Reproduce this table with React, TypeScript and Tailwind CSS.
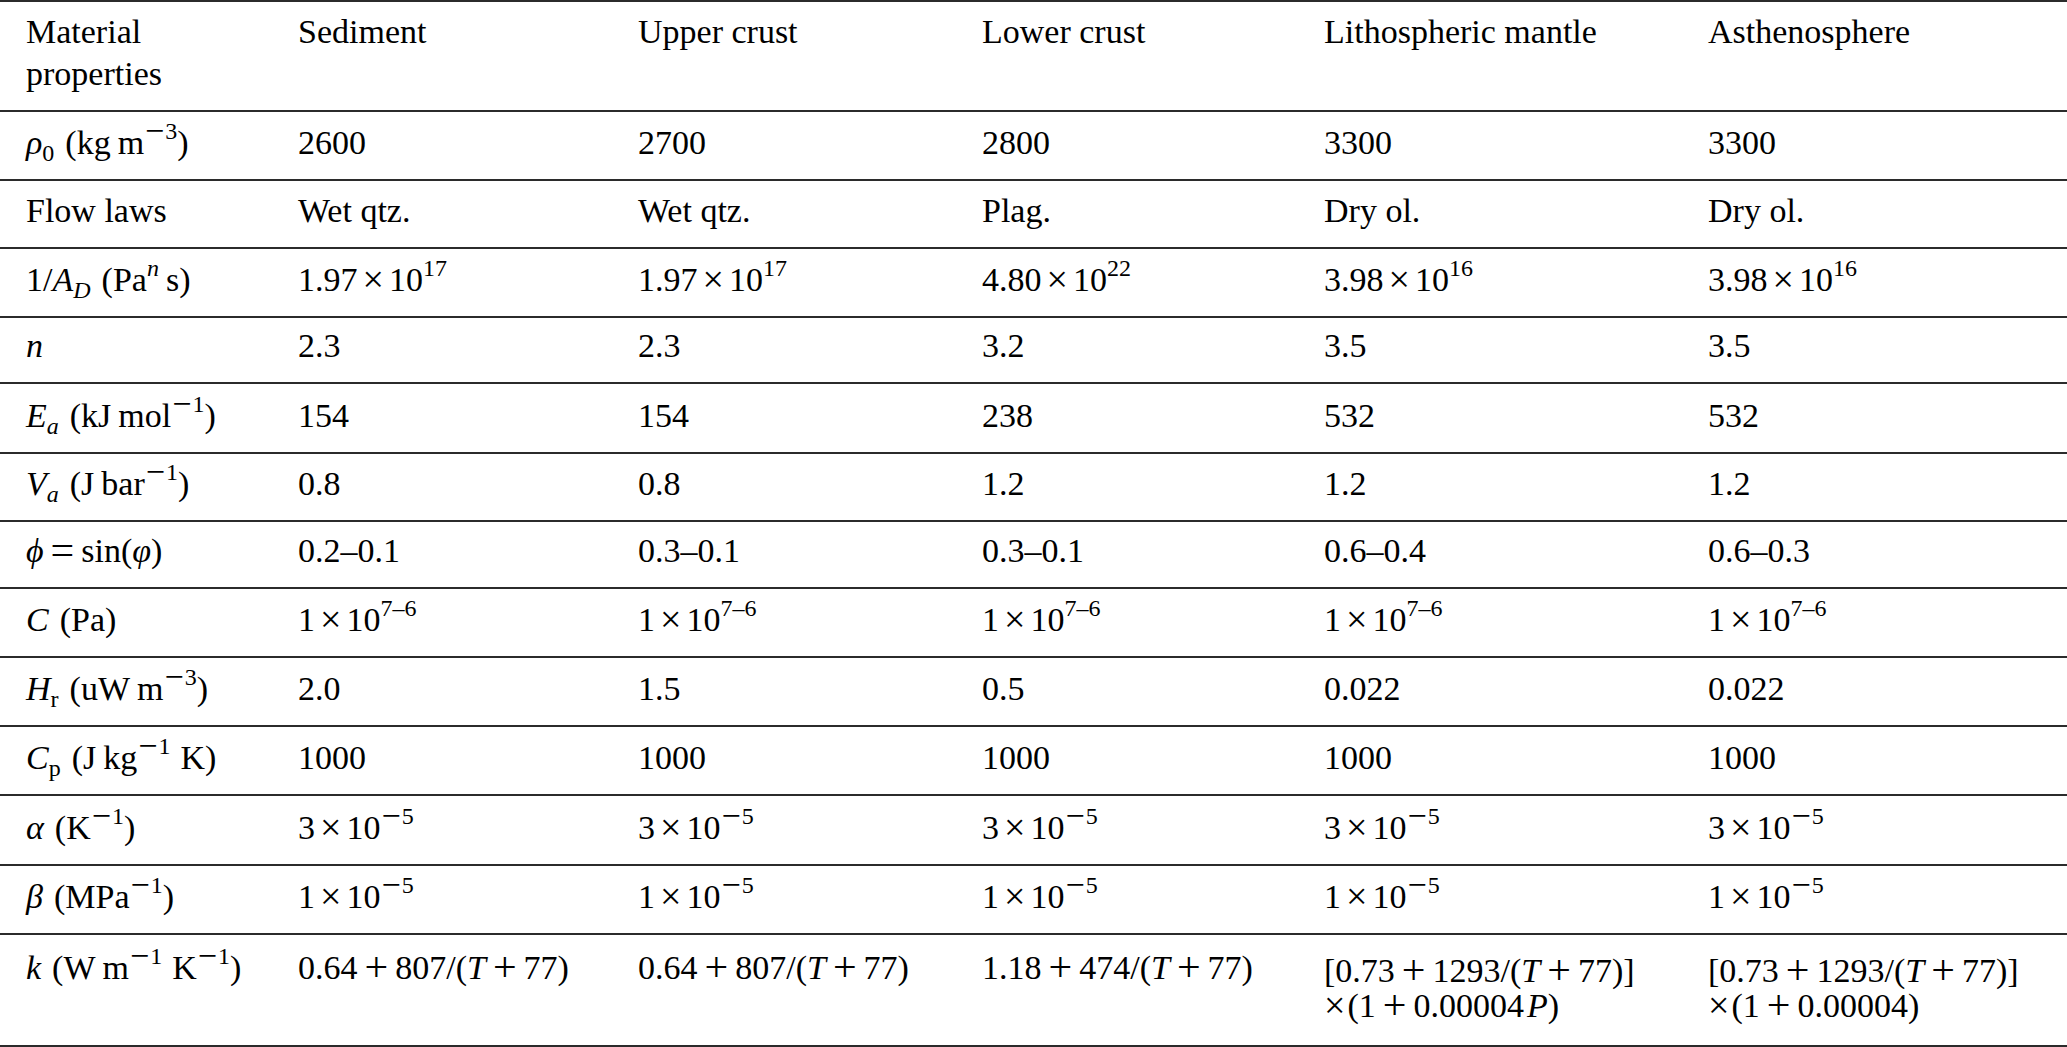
import type { ReactNode } from "react";

const Sup = ({ children }: { children: ReactNode }) => (
  <span className="align-[15px] text-[24px] leading-[10px]">{children}</span>
);

const Sub = ({ children, it }: { children: ReactNode; it?: boolean }) => (
  <span className={it ? "align-[-7px] text-[24px] leading-[10px] italic" : "align-[-7px] text-[24px] leading-[10px]"}>
    {children}
  </span>
);

const I = ({ children }: { children: ReactNode }) => <span className="italic">{children}</span>;

// math operators are a size larger than the text glyphs
const Op = ({ children }: { children: ReactNode }) => (
  <span className="align-[-2px] mx-[7px] text-[42px] leading-[10px]">{children}</span>
);

const Times = ({ tight }: { tight?: boolean }) => (
  <span className={tight ? "align-[-1px] mr-[2px] text-[38px] leading-[10px]" : "align-[-1px] mx-[5px] text-[38px] leading-[10px]"}>
    ×
  </span>
);

// the superscript minus is the long math minus
const Minus = () => <span className="align-[-3px] mx-[1px] text-[34px] leading-[10px]">−</span>;

const neg = (d: string) => (
  <>
    <Minus />
    {d}
  </>
);

const Pow = ({ base, exp }: { base: string; exp: ReactNode }) => (
  <>
    {base}
    <Times />
    10
    <Sup>{exp}</Sup>
  </>
);

const K = ({ a, b }: { a: string; b: string }) => (
  <>
    {a}
    <Op>+</Op>
    {b}/(<I>T</I>
    <Op>+</Op>77)
  </>
);

// symbol followed by its unit in brackets
const Lbl = ({ sym, unit }: { sym: ReactNode; unit: ReactNode }) => (
  <>
    {sym}
    <span className="ml-[11px]">({unit})</span>
  </>
);

const U = ({ children }: { children: ReactNode }) => <span className="ml-[7px]">{children}</span>;

type Row = { h: string; cells: ReactNode[] };

const five = (v: ReactNode): ReactNode[] => [v, v, v, v, v];

const rows: Row[] = [
  {
    h: "h-[69px]",
    cells: [
      <Lbl
        sym={
          <>
            <I>ρ</I>
            <Sub>0</Sub>
          </>
        }
        unit={
          <>
            kg<U>m</U>
            <Sup>{neg("3")}</Sup>
          </>
        }
      />,
      "2600",
      "2700",
      "2800",
      "3300",
      "3300",
    ],
  },
  { h: "h-[68px]", cells: ["Flow laws", "Wet qtz.", "Wet qtz.", "Plag.", "Dry ol.", "Dry ol."] },
  {
    h: "h-[69px]",
    cells: [
      <Lbl
        sym={
          <>
            1/<I>A</I>
            <Sub it>D</Sub>
          </>
        }
        unit={
          <>
            Pa
            <Sup>
              <I>n</I>
            </Sup>
            <U>s</U>
          </>
        }
      />,
      <Pow base="1.97" exp="17" />,
      <Pow base="1.97" exp="17" />,
      <Pow base="4.80" exp="22" />,
      <Pow base="3.98" exp="16" />,
      <Pow base="3.98" exp="16" />,
    ],
  },
  { h: "h-[66px]", cells: [<I>n</I>, "2.3", "2.3", "3.2", "3.5", "3.5"] },
  {
    h: "h-[70px]",
    cells: [
      <Lbl
        sym={
          <>
            <I>E</I>
            <Sub it>a</Sub>
          </>
        }
        unit={
          <>
            kJ<U>mol</U>
            <Sup>{neg("1")}</Sup>
          </>
        }
      />,
      "154",
      "154",
      "238",
      "532",
      "532",
    ],
  },
  {
    h: "h-[68px]",
    cells: [
      <Lbl
        sym={
          <>
            <I>V</I>
            <Sub it>a</Sub>
          </>
        }
        unit={
          <>
            J<U>bar</U>
            <Sup>{neg("1")}</Sup>
          </>
        }
      />,
      "0.8",
      "0.8",
      "1.2",
      "1.2",
      "1.2",
    ],
  },
  {
    h: "h-[67px]",
    cells: [
      <>
        <I>ϕ</I>
        <Op>=</Op>sin(<I>φ</I>)
      </>,
      "0.2–0.1",
      "0.3–0.1",
      "0.3–0.1",
      "0.6–0.4",
      "0.6–0.3",
    ],
  },
  {
    h: "h-[69px]",
    cells: [<Lbl sym={<I>C</I>} unit="Pa" />, ...five(<Pow base="1" exp="7–6" />)],
  },
  {
    h: "h-[69px]",
    cells: [
      <Lbl
        sym={
          <>
            <I>H</I>
            <Sub>r</Sub>
          </>
        }
        unit={
          <>
            uW<U>m</U>
            <Sup>{neg("3")}</Sup>
          </>
        }
      />,
      "2.0",
      "1.5",
      "0.5",
      "0.022",
      "0.022",
    ],
  },
  {
    h: "h-[69px]",
    cells: [
      <Lbl
        sym={
          <>
            <I>C</I>
            <Sub>p</Sub>
          </>
        }
        unit={
          <>
            J<U>kg</U>
            <Sup>{neg("1")}</Sup>
            <span className="ml-[10px]">K</span>
          </>
        }
      />,
      ...five("1000"),
    ],
  },
  {
    h: "h-[70px]",
    cells: [
      <Lbl
        sym={<I>α</I>}
        unit={
          <>
            K<Sup>{neg("1")}</Sup>
          </>
        }
      />,
      ...five(<Pow base="3" exp={neg("5")} />),
    ],
  },
  {
    h: "h-[69px]",
    cells: [
      <Lbl
        sym={<I>β</I>}
        unit={
          <>
            MPa<Sup>{neg("1")}</Sup>
          </>
        }
      />,
      ...five(<Pow base="1" exp={neg("5")} />),
    ],
  },
];

const grid = "grid grid-cols-[272px_340px_344px_342px_384px_1fr] border-b-2 border-[#2b2b2b]";

export default function App() {
  const header = ["Sediment", "Upper crust", "Lower crust", "Lithospheric mantle", "Asthenosphere"];
  return (
    <div className="min-h-screen w-full bg-white text-black font-['Liberation_Serif','Times_New_Roman',serif] text-[34px]">
      <div className="border-t-2 border-[#2b2b2b]">
        <div className={`${grid} h-[110px]`}>
          <div className="pl-[26px] pt-[9px] leading-[42px]">
            Material
            <br />
            properties
          </div>
          {header.map((h) => (
            <div key={h} className="pl-[26px] pt-[9px] leading-[42px] whitespace-nowrap">
              {h}
            </div>
          ))}
        </div>

        {rows.map((r, i) => (
          <div key={i} className={`${grid} ${r.h}`}>
            {r.cells.map((c, j) => (
              <div key={j} className="flex items-end pl-[26px] pb-[16px] leading-[41px] whitespace-nowrap">
                <span>{c}</span>
              </div>
            ))}
          </div>
        ))}

        <div className={`${grid} h-[112px]`}>
          <div className="pl-[26px] pt-[15px] leading-[35px] whitespace-nowrap">
            <Lbl
              sym={<I>k</I>}
              unit={
                <>
                  W<U>m</U>
                  <Sup>{neg("1")}</Sup>
                  <span className="ml-[10px]">K</span>
                  <Sup>{neg("1")}</Sup>
                </>
              }
            />
          </div>
          <div className="pl-[26px] pt-[15px] leading-[35px] whitespace-nowrap">
            <K a="0.64" b="807" />
          </div>
          <div className="pl-[26px] pt-[15px] leading-[35px] whitespace-nowrap">
            <K a="0.64" b="807" />
          </div>
          <div className="pl-[26px] pt-[15px] leading-[35px] whitespace-nowrap">
            <K a="1.18" b="474" />
          </div>
          <div className="flex flex-col pl-[26px] pt-[18px] leading-[35px] whitespace-nowrap">
            <span>
              [<K a="0.73" b="1293" />]
            </span>
            <span>
              <Times tight />
              (1<Op>+</Op>0.00004<span className="ml-[3px] italic">P</span>)
            </span>
          </div>
          <div className="flex flex-col pl-[26px] pt-[18px] leading-[35px] whitespace-nowrap">
            <span>
              [<K a="0.73" b="1293" />]
            </span>
            <span>
              <Times tight />
              (1<Op>+</Op>0.00004)
            </span>
          </div>
        </div>
      </div>
    </div>
  );
}
